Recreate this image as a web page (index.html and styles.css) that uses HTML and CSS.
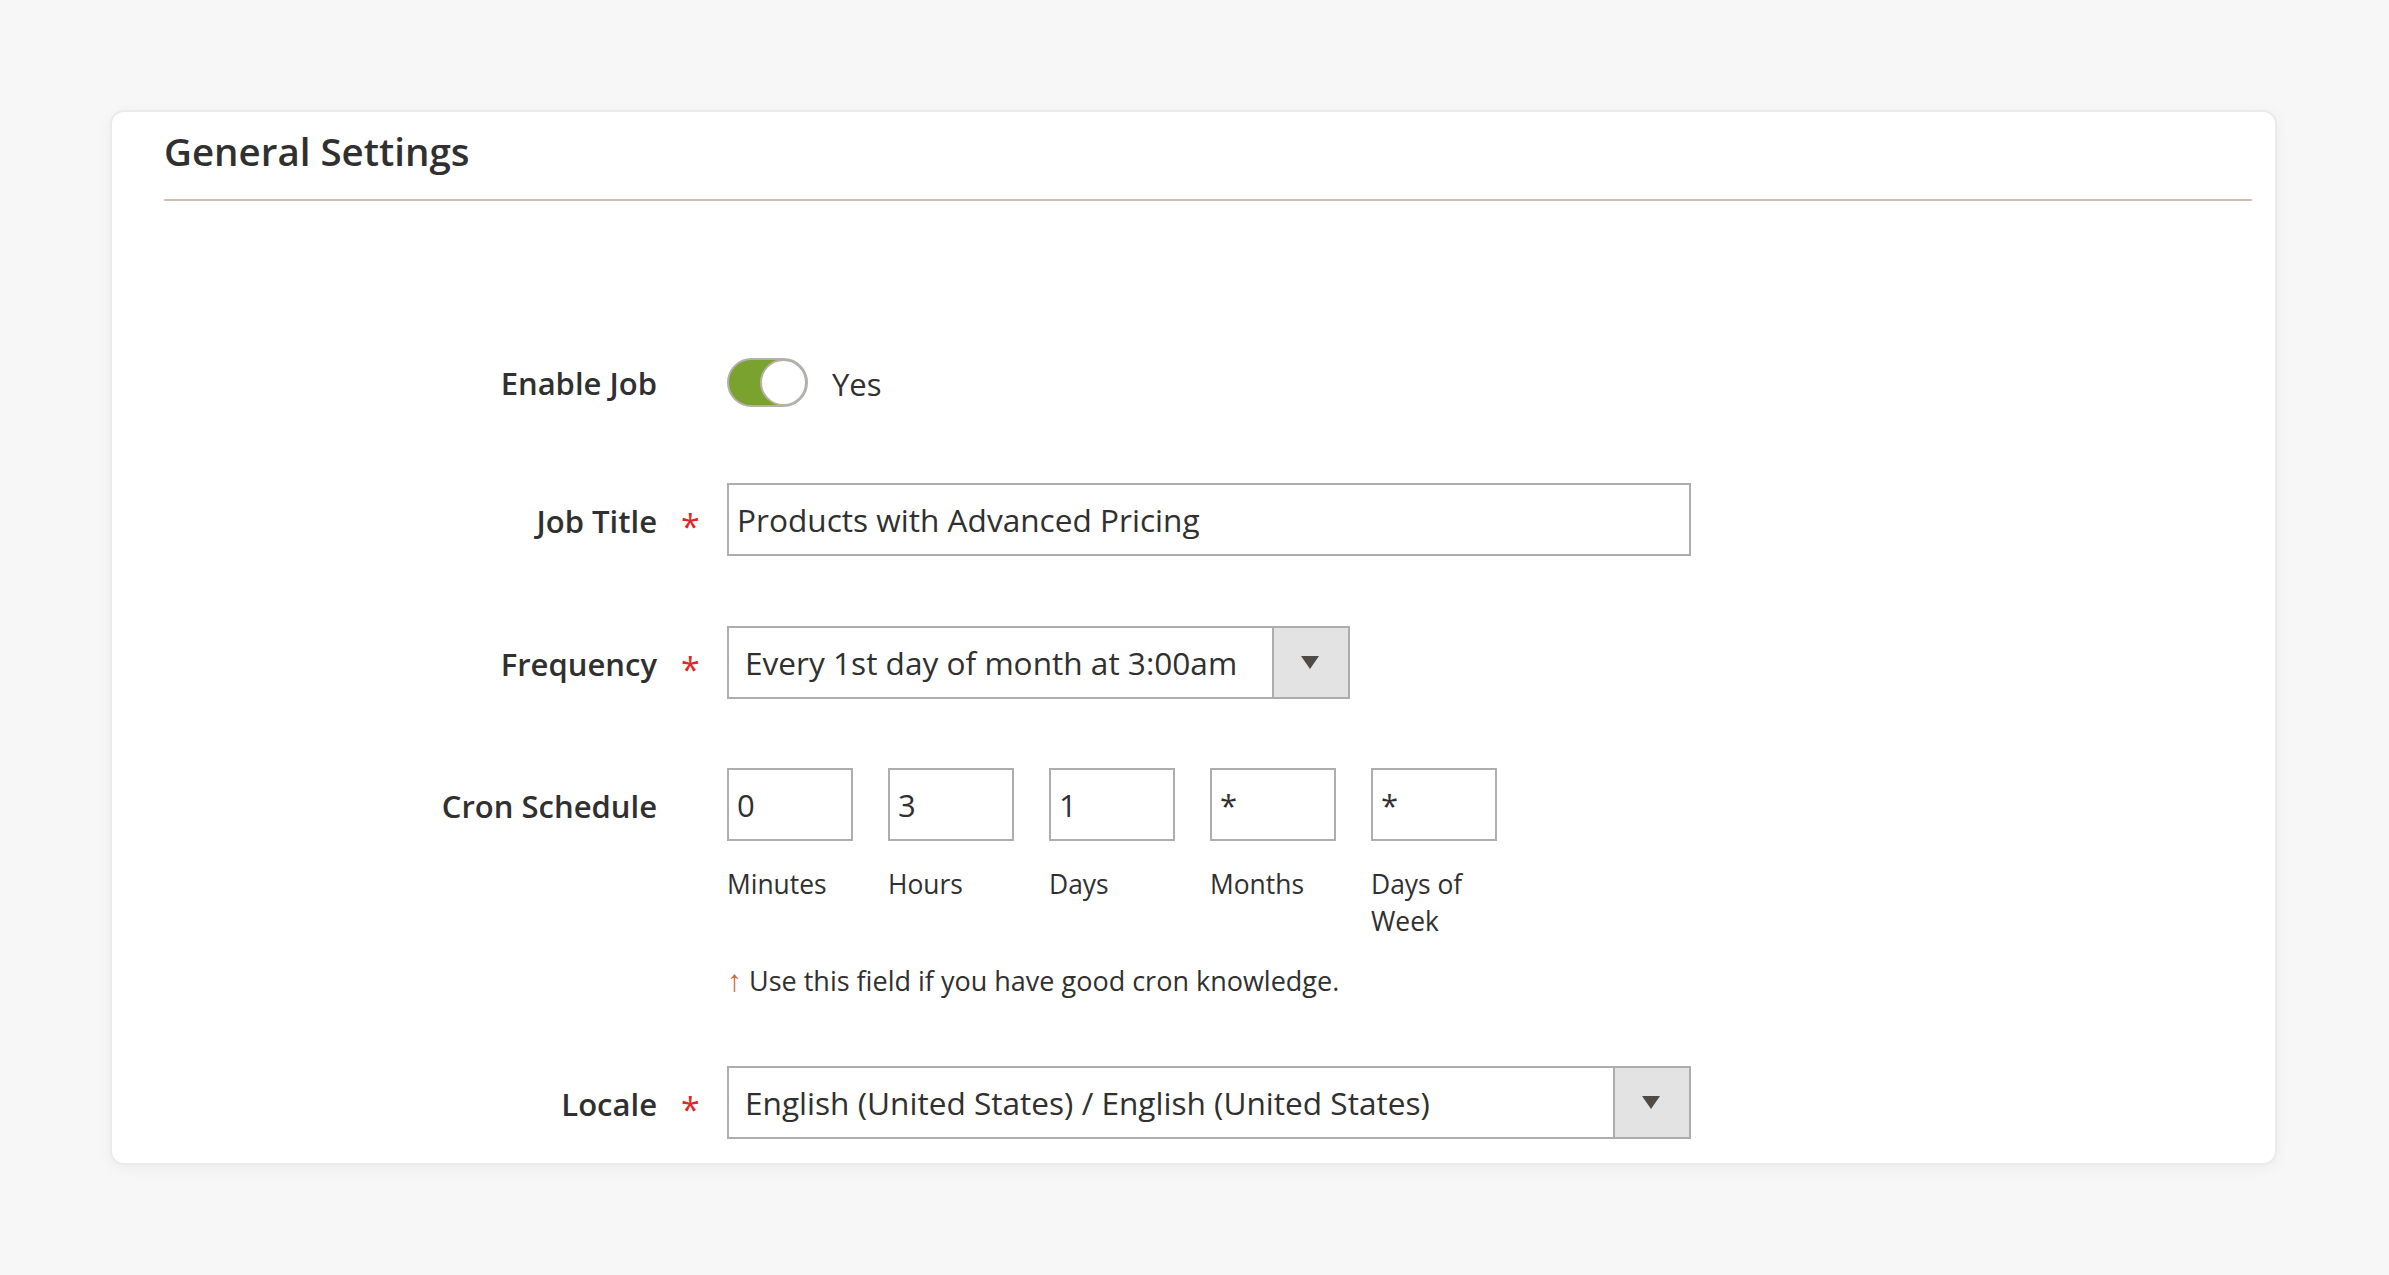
FILE: index.html
```html
<!DOCTYPE html>
<html lang="en">
<head>
<meta charset="utf-8">
<title>General Settings</title>
<link rel="stylesheet" href="styles.css">
</head>
<body>
<div class="page">
  <section class="card">
    <header class="card-head">
      <h2 class="card-title">General Settings</h2>
    </header>
    <div class="form">
      <div class="row row-toggle">
        <div class="label">Enable Job</div>
        <div class="req"></div>
        <div class="control toggle-control">
          <span class="switch"><span class="knob"></span></span>
          <span class="switch-text">Yes</span>
        </div>
      </div>

      <div class="row row-title">
        <div class="label">Job Title</div>
        <div class="req"><span class="star">*</span></div>
        <div class="control">
          <div class="input wide">Products with Advanced Pricing</div>
        </div>
      </div>

      <div class="row row-freq">
        <div class="label">Frequency</div>
        <div class="req"><span class="star">*</span></div>
        <div class="control">
          <div class="select freq">
            <span class="select-value">Every 1st day of month at 3:00am</span>
            <span class="select-btn"><span class="tri"></span></span>
          </div>
        </div>
      </div>

      <div class="row row-cron">
        <div class="label">Cron Schedule</div>
        <div class="req"></div>
        <div class="control cron-control">
          <div class="cron-fields">
            <div class="cron-cell"><div class="input cron">0</div><div class="cron-label">Minutes</div></div>
            <div class="cron-cell"><div class="input cron">3</div><div class="cron-label">Hours</div></div>
            <div class="cron-cell"><div class="input cron">1</div><div class="cron-label">Days</div></div>
            <div class="cron-cell"><div class="input cron">*</div><div class="cron-label">Months</div></div>
            <div class="cron-cell"><div class="input cron">*</div><div class="cron-label">Days of Week</div></div>
          </div>
          <div class="note"><span class="note-arrow">↑</span> Use this field if you have good cron knowledge.</div>
        </div>
      </div>

      <div class="row row-locale">
        <div class="label">Locale</div>
        <div class="req"><span class="star">*</span></div>
        <div class="control">
          <div class="select wide">
            <span class="select-value">English (United States) / English (United States)</span>
            <span class="select-btn"><span class="tri"></span></span>
          </div>
        </div>
      </div>
    </div>
  </section>
</div>
</body>
</html>
```

FILE: styles.css
```css
* { box-sizing: border-box; }

html, body {
  margin: 0;
  padding: 0;
  background: #f7f7f7;
}

body {
  font-family: "Open Sans", "Noto Sans", "Liberation Sans", sans-serif;
  color: #303030;
  width: 2389px;
  height: 1275px;
  overflow: hidden;
}

.page {
  padding: 110px 0 0 110px;
}

.card {
  width: 2167px;
  background: #ffffff;
  border: 2px solid #ebebeb;
  border-radius: 14px;
  box-shadow: 0 3px 14px rgba(0, 0, 0, 0.05);
  padding-bottom: 24px;
}

.card-head {
  margin: 0 23px 0 52px;
  padding: 13px 0 21px 0;
  border-bottom: 2px solid #cac3b4;
}

.card-title {
  margin: 0;
  font-size: 38.5px;
  line-height: 53px;
  font-weight: 600;
  color: #303030;
}

.form {
  display: flex;
  flex-direction: column;
  margin-top: 157px;
}

.row {
  display: grid;
  grid-template-columns: 545px 70px 1fr;
  align-items: start;
}

.row-title { margin-top: 76px; }
.row-freq { margin-top: 70px; }
.row-cron { margin-top: 69px; }
.row-locale { margin-top: 67px; }

.label {
  height: 73px;
  display: flex;
  align-items: center;
  justify-content: flex-end;
  padding-top: 3px;
  font-size: 31px;
  line-height: 42px;
  font-weight: 600;
  color: #303030;
}

.req {
  height: 73px;
  display: flex;
  align-items: center;
  padding-left: 24px;
}

.row-toggle .label { height: 49px; padding-top: 1px; }
.row-toggle .req { height: 49px; }

.star {
  color: #e22626;
  font-size: 34px;
  line-height: 34px;
  font-weight: 400;
  padding-top: 12px;
}

.control {
  font-size: 31px;
  line-height: 42px;
}

.toggle-control {
  display: flex;
  align-items: center;
  height: 49px;
  gap: 24px;
}

.switch {
  position: relative;
  display: block;
  width: 81px;
  height: 49px;
  border-radius: 25px;
  background: #79a22e;
  border: 2px solid #b5b0a9;
}

.knob {
  position: absolute;
  top: -1px;
  right: -1px;
  width: 47px;
  height: 47px;
  border-radius: 50%;
  background: #ffffff;
  border: 2px solid #b5b0a9;
}

.switch-text {
  font-size: 31px;
  line-height: 42px;
  padding-top: 2px;
}

.input {
  height: 73px;
  border: 2px solid #adadad;
  background: #fff;
  display: flex;
  align-items: center;
  padding-left: 8px;
  font-size: 31.6px;
  color: #303030;
}

.wide { width: 964px; }

.select {
  height: 73px;
  border: 2px solid #adadad;
  background: #fff;
  display: flex;
  align-items: stretch;
  font-size: 31.6px;
}

.select.freq { width: 623px; }

.select-value {
  flex: 1;
  display: flex;
  align-items: center;
  padding-left: 16px;
  white-space: nowrap;
}

.select-btn {
  width: 76px;
  border-left: 2px solid #adadad;
  background: #e3e3e3;
  display: flex;
  align-items: center;
  justify-content: center;
}

.tri {
  width: 0;
  height: 0;
  border-left: 9px solid transparent;
  border-right: 9px solid transparent;
  border-top: 13px solid #514943;
  margin-right: 2px;
}

.cron-fields {
  display: flex;
  gap: 35px;
}

.cron-cell {
  width: 126px;
}

.input.cron {
  width: 126px;
  padding-left: 8px;
  font-size: 31px;
}

.cron-label {
  margin-top: 25px;
  font-size: 26.4px;
  line-height: 37px;
  color: #303030;
}

.note {
  margin-top: 21px;
  font-size: 27px;
  line-height: 37px;
  color: #303030;
}

.note-arrow {
  color: #c9683a;
  font-size: 30px;
}
```
